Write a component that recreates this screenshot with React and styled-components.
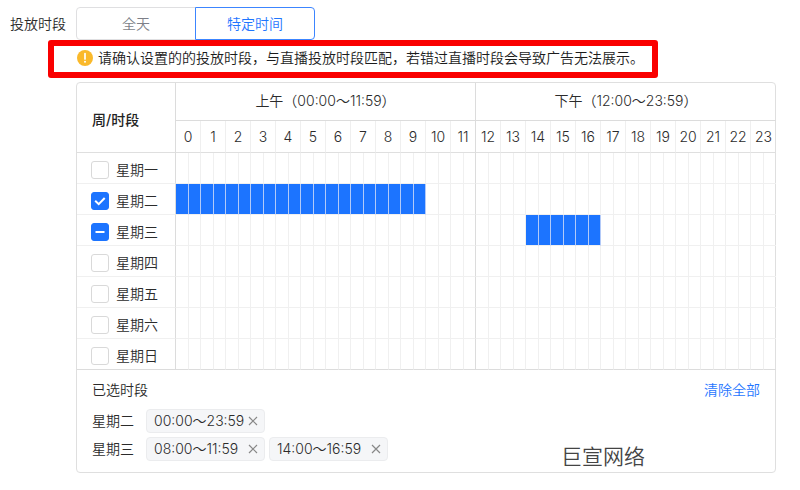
import { useEffect, useRef, useState } from "react";
import styled, { createGlobalStyle, css } from "styled-components";

const GlobalStyle = createGlobalStyle`
  * {
    box-sizing: border-box;
  }
  body {
    margin: 0;
    background: #fff;
    color: #2b2b2b;
    font-family: Inter, "Noto Sans CJK SC", sans-serif;
    font-size: 14px;
    font-weight: 350;
    line-height: 20px;
  }
  button {
    font: inherit;
    padding: 0;
    cursor: pointer;
  }
`;

const Wrapper = styled.main`
  padding: 7px 24px 16px 0;
`;

const FormRow = styled.div`
  display: flex;
  align-items: center;
  gap: 10px;
  padding-left: 10px;
`;

const FormLabel = styled.span`
  white-space: nowrap;
`;

const Segmented = styled.div`
  display: flex;
`;

const SegmentButton = styled.button`
  width: 120px;
  height: 33px;
  border: 1px solid #dfdfe1;
  background: #fff;
  color: #7d7f88;

  &:first-child {
    border-radius: 4px 0 0 4px;
  }
  &:last-child {
    border-radius: 0 4px 4px 0;
    margin-left: -1px;
  }
  ${(props) =>
    props.$active &&
    css`
      position: relative;
      border-color: #3c85ff;
      color: #1f76ff;
    `}
`;

const Notice = styled.div`
  display: flex;
  align-items: center;
  gap: 5px;
  width: fit-content;
  height: 38px;
  margin-left: 48px;
  padding: 0 8px 2px 23px;
  border: 6px solid #fa0000;
  border-radius: 3px;
  color: #1c1c1c;
`;

const Panel = styled.section`
  position: relative;
  margin: 4px 0 0 76px;
  border: 1px solid #dfdfdf;
  border-radius: 4px;
`;

// 1px wider than the panel, so the last column ends on the panel's border
const Table = styled.table`
  width: calc(100% + 1px);
  table-layout: fixed;
  border-collapse: separate;
  border-spacing: 0;

  th,
  td {
    padding: 0;
    font-weight: inherit;
  }
`;

const DayCol = styled.col`
  width: 99px;
`;

const CornerCell = styled.th`
  && {
    padding: 4px 0 0 15px;
    border-right: 1px solid #dcdcdc;
    border-bottom: 1px solid #dfdfdf;
    color: #222;
    font-weight: 500;
    text-align: left;
  }
`;

const PeriodCell = styled.th`
  && {
    height: 38px;
    padding-bottom: 2px;
    border-bottom: 1px solid #dcdcdc;
    border-right: ${(props) => (props.$last ? "none" : "1px solid #dcdcdc")};
  }
`;

const HourCell = styled.th`
  height: 32px;
  border-bottom: 1px solid #dfdfdf;
  border-right: 1px solid ${(props) => (props.$noon ? "#dcdcdc" : "#efefef")};

  &:last-child {
    border-right: none;
  }
`;

const DayCell = styled.th`
  height: 31px;
  border-right: 1px solid #dcdcdc;
  border-bottom: 1px solid ${(props) => (props.$last ? "#dcdcdc" : "#f0f0f0")};
`;

const SlotCell = styled.td`
  border-right: 1px solid
    ${(props) => (props.$noon ? "#dcdcdc" : props.$on ? "#b3caf8" : "#f0f0f0")};
  border-bottom: 1px solid ${(props) => (props.$last ? "#dcdcdc" : "#f0f0f0")};
  background: ${(props) => (props.$on ? "#1c74ff" : "transparent")};
  background-clip: padding-box;

  &:last-child {
    border-right: none;
  }
`;

const DayLabel = styled.label`
  display: flex;
  align-items: center;
  gap: 7px;
  padding: 3px 0 0 14px;
`;

const CheckWrap = styled.span`
  display: grid;

  > * {
    grid-area: 1 / 1;
  }
  svg {
    pointer-events: none;
  }
`;

const CheckInput = styled.input`
  appearance: none;
  width: 18px;
  height: 18px;
  margin: 0;
  border: 1px solid #d9d9d9;
  border-radius: 3px;
  background: #fff;

  &:checked,
  &:indeterminate {
    border-color: #1c74ff;
    background: #1c74ff;
  }
`;

const Footer = styled.div`
  padding: 10px 15px 11px;
`;

const FooterHead = styled.div`
  display: flex;
  justify-content: space-between;
  margin-bottom: 9px;
`;

const ClearButton = styled.button`
  border: none;
  background: none;
  color: #1f76ff;
`;

const SelectedRow = styled.div`
  display: flex;
  align-items: center;
  gap: 4px;
  min-height: 24px;
  margin-top: 4px;
`;

const SelectedDay = styled.span`
  width: 50px;
`;

const Chip = styled.span`
  display: flex;
  align-items: center;
  justify-content: space-between;
  gap: 2px;
  min-width: 119px;
  height: 24px;
  padding: 0 6px 0 7px;
  border: 1px solid #ebecee;
  border-radius: 4px;
  background: #f5f6f8;
`;

const ChipClose = styled.button`
  display: flex;
  border: none;
  background: none;
  color: #888;
`;

const Watermark = styled.span`
  position: absolute;
  right: 130px;
  bottom: 0;
  color: #444;
  font-size: 21px;
  line-height: 30px;
`;

const HOURS = Array.from({ length: 24 }, (_, i) => i);
const SLOTS = Array.from({ length: 48 }, (_, i) => i);

// from / to are half-hour slots, to is exclusive
const DAYS = [
  { name: "星期一" },
  { name: "星期二", checked: true, from: 0, to: 20 },
  { name: "星期三", partial: true, from: 28, to: 34 },
  { name: "星期四" },
  { name: "星期五" },
  { name: "星期六" },
  { name: "星期日" },
];

const SELECTED = [
  { day: "星期二", ranges: ["00:00～23:59"] },
  { day: "星期三", ranges: ["08:00～11:59", "14:00～16:59"] },
];

function Checkbox({ checked, partial, onChange }) {
  const ref = useRef(null);

  useEffect(() => {
    ref.current.indeterminate = !!partial;
  }, [partial]);

  return (
    <CheckWrap>
      <CheckInput ref={ref} type="checkbox" checked={!!checked} onChange={onChange} />
      <svg width="18" height="18" viewBox="0 0 18 18" fill="none" stroke="#fff" strokeWidth="2">
        {partial && <path d="M4.5 9h9" />}
        {checked && !partial && <path d="M4.2 8.8l3.5 3.4 6-6.2" />}
      </svg>
    </CheckWrap>
  );
}

function WarningIcon() {
  return (
    <svg width="16" height="16" viewBox="0 0 16 16" aria-hidden="true">
      <circle cx="8" cy="8" r="8" fill="#fab92b" />
      <path d="M8 3.6v5.4" stroke="#fff" strokeWidth="1.7" strokeLinecap="round" />
      <circle cx="8" cy="11.8" r="1" fill="#fff" />
    </svg>
  );
}

function App() {
  const [mode, setMode] = useState("custom");
  const [days, setDays] = useState(DAYS);
  const [selected, setSelected] = useState(SELECTED);

  const toggleDay = (name) => {
    setDays(
      days.map((d) => {
        if (d.name !== name) return d;
        return d.checked ? { name } : { name, checked: true, from: 0, to: 48 };
      })
    );
  };

  const removeRange = (day, range) => {
    setSelected(
      selected
        .map((s) => (s.day === day ? { ...s, ranges: s.ranges.filter((r) => r !== range) } : s))
        .filter((s) => s.ranges.length > 0)
    );
  };

  const clearAll = () => {
    setDays(DAYS.map((d) => ({ name: d.name })));
    setSelected([]);
  };

  return (
    <Wrapper>
      <GlobalStyle />
      <FormRow>
        <FormLabel id="period-label">投放时段</FormLabel>
        <Segmented role="group" aria-labelledby="period-label">
          <SegmentButton type="button" $active={mode === "all"} onClick={() => setMode("all")}>
            全天
          </SegmentButton>
          <SegmentButton type="button" $active={mode === "custom"} onClick={() => setMode("custom")}>
            特定时间
          </SegmentButton>
        </Segmented>
      </FormRow>

      <Notice role="alert">
        <WarningIcon />
        请确认设置的的投放时段，与直播投放时段匹配，若错过直播时段会导致广告无法展示。
      </Notice>

      <Panel>
        <Table>
          <colgroup>
            <DayCol />
            {SLOTS.map((s) => (
              <col key={s} />
            ))}
          </colgroup>
          <thead>
            <tr>
              <CornerCell rowSpan={2}>周/时段</CornerCell>
              <PeriodCell colSpan={24}>上午（00:00～11:59）</PeriodCell>
              <PeriodCell colSpan={24} $last>
                下午（12:00～23:59）
              </PeriodCell>
            </tr>
            <tr>
              {HOURS.map((h) => (
                <HourCell key={h} colSpan={2} $noon={h === 11}>
                  {h}
                </HourCell>
              ))}
            </tr>
          </thead>
          <tbody>
            {days.map((d, i) => {
              const last = i === days.length - 1;
              return (
                <tr key={d.name}>
                  <DayCell $last={last}>
                    <DayLabel>
                      <Checkbox checked={d.checked} partial={d.partial} onChange={() => toggleDay(d.name)} />
                      {d.name}
                    </DayLabel>
                  </DayCell>
                  {SLOTS.map((s) => (
                    <SlotCell key={s} $on={s >= d.from && s < d.to} $noon={s === 23} $last={last} />
                  ))}
                </tr>
              );
            })}
          </tbody>
        </Table>

        <Footer>
          <FooterHead>
            <span>已选时段</span>
            <ClearButton type="button" onClick={clearAll}>
              清除全部
            </ClearButton>
          </FooterHead>
          {selected.map((s) => (
            <SelectedRow key={s.day}>
              <SelectedDay>{s.day}</SelectedDay>
              {s.ranges.map((r) => (
                <Chip key={r}>
                  {r}
                  <ChipClose type="button" aria-label="删除" onClick={() => removeRange(s.day, r)}>
                    <svg width="10" height="10" viewBox="0 0 10 10" stroke="currentColor" strokeWidth="1.2">
                      <path d="M1 1l8 8M9 1l-8 8" />
                    </svg>
                  </ChipClose>
                </Chip>
              ))}
            </SelectedRow>
          ))}
        </Footer>
        <Watermark>巨宣网络</Watermark>
      </Panel>
    </Wrapper>
  );
}

export default App;
